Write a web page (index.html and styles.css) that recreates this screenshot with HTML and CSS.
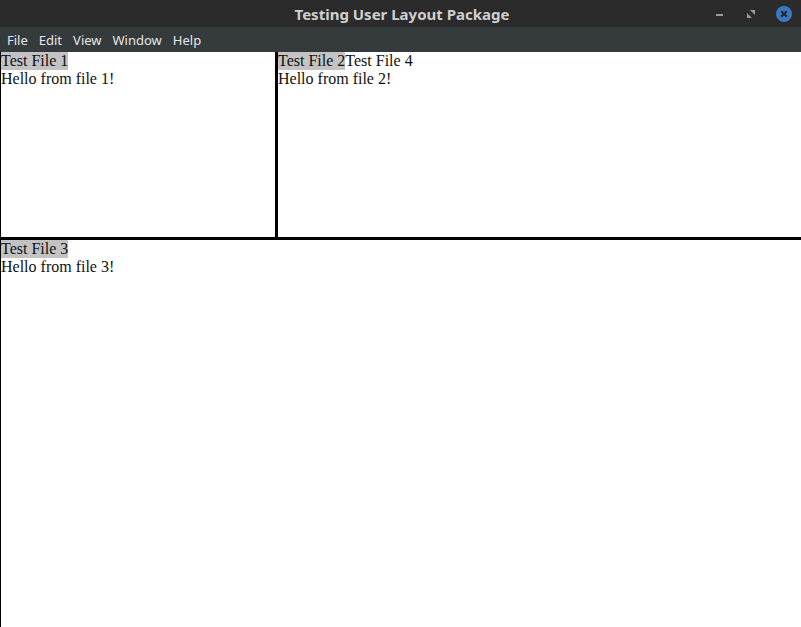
FILE: index.html
```html
<!DOCTYPE html>
<html>
<head>
<meta charset="utf-8">
<link rel="stylesheet" href="styles.css">
</head>
<body>
<div class="app">
  <div class="titlebar">
    <div class="title">Testing User Layout Package</div>
    <div class="controls">
      <svg class="ctl" width="12" height="12" viewBox="0 0 12 12"><rect x="2" y="6" width="7" height="2" fill="#9a9a9a"/></svg>
      <svg class="ctl" width="12" height="12" viewBox="0 0 12 12"><path d="M5 2h5v5z M2 5l5 5h-5z" fill="#9a9a9a"/></svg>
      <svg class="close" width="16" height="16" viewBox="0 0 16 16"><circle cx="8" cy="8" r="8" fill="#3a78c3"/><path d="M5.2 5.2L10.8 10.8M10.8 5.2L5.2 10.8" stroke="#22282c" stroke-width="2.2"/></svg>
    </div>
  </div>
  <div class="menubar">
    <span class="mi">File</span>
    <span class="mi">Edit</span>
    <span class="mi">View</span>
    <span class="mi">Window</span>
    <span class="mi">Help</span>
  </div>
  <div class="content">
    <div class="toprow">
      <div class="pane left">
        <div class="tabs"><span class="tab active">Test File 1</span></div>
        <div class="text">Hello from file 1!</div>
      </div>
      <div class="vsplit"></div>
      <div class="pane right">
        <div class="tabs"><span class="tab active">Test File 2</span><span class="tab">Test File 4</span></div>
        <div class="text">Hello from file 2!</div>
      </div>
    </div>
    <div class="hsplit"></div>
    <div class="pane bottom">
      <div class="tabs"><span class="tab active">Test File 3</span></div>
      <div class="text">Hello from file 3!</div>
    </div>
  </div>
</div>
</body>
</html>
```
FILE: styles.css
```css
html, body {
  margin: 0;
  padding: 0;
  width: 801px;
  height: 627px;
  overflow: hidden;
  background: #ffffff;
}
.app {
  display: flex;
  flex-direction: column;
  height: 627px;
}
.titlebar {
  height: 27px;
  background: #2b2b2b;
  display: flex;
  align-items: center;
  justify-content: center;
  position: relative;
}
.title {
  font-family: "Noto Sans", "DejaVu Sans", sans-serif;
  font-weight: bold;
  font-size: 15px;
  color: #d0d0d0;
  margin-left: 3px;
}
.controls {
  position: absolute;
  right: 9px;
  top: 6px;
  display: flex;
  align-items: center;
  gap: 19px;
}
.ctl { display: block; }
.close { display: block; }
.menubar {
  height: 25px;
  background: #353b3d;
  display: flex;
  align-items: center;
  padding-left: 7px;
  gap: 11px;
  font-family: "Noto Sans", "DejaVu Sans", sans-serif;
  font-size: 13px;
  color: #e6e6e6;
}
.content {
  flex: 1;
  display: flex;
  flex-direction: column;
  font-family: "Liberation Serif", "Times New Roman", serif;
  font-size: 16px;
  color: #111;
  line-height: 18px;
}
.toprow {
  height: 185px;
  display: flex;
}
.pane {
  background: #fff;
}
.left {
  width: 274px;
  border-left: 1px solid #000;
}
.right {
  flex: 1;
}
.vsplit {
  width: 3px;
  background: #000;
}
.hsplit {
  height: 3px;
  background: #000;
}
.bottom {
  flex: 1;
  border-left: 1px solid #000;
}
.tabs {
  display: flex;
  height: 18px;
}
.tab {
  white-space: nowrap;
}
.tab.active {
  background: #c3c3c3;
}
```
